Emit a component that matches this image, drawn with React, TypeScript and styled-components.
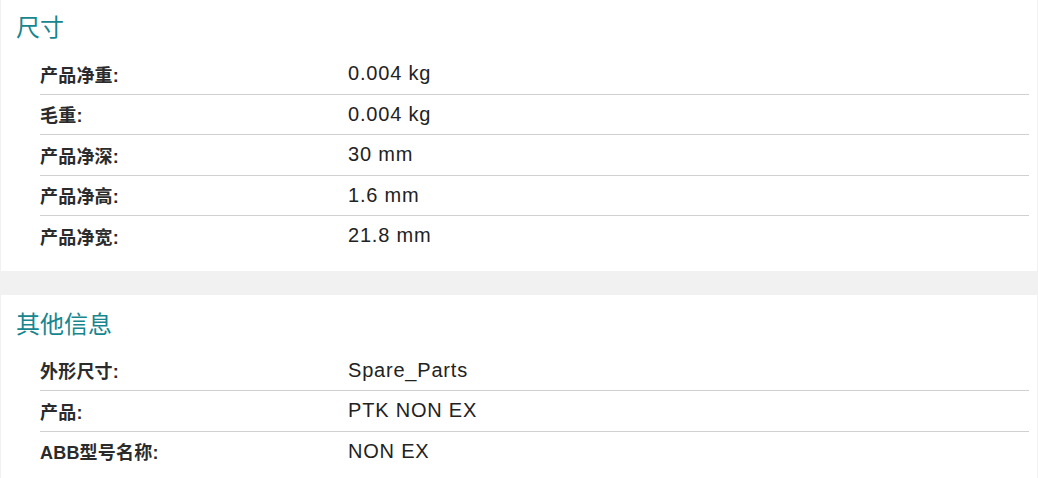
import React from "react";
import styled, { createGlobalStyle } from "styled-components";

const Global = createGlobalStyle`
  html, body { margin: 0; padding: 0; }
  body {
    background: #f1f1f1;
    font-family: "Liberation Sans", "Noto Sans CJK SC", sans-serif;
    overflow: hidden;
  }
`;

const Page = styled.div`
  display: flex;
  flex-direction: column;
  gap: 24px;
  margin-top: -2px;
  padding: 0 1px;
`;

const Card = styled.section`
  background: #ffffff;
  padding: 13px 8px 15px 0;
`;

const Title = styled.h2`
  margin: 0 0 0 15px;
  height: 30px;
  line-height: 30px;
  font-family: "Noto Sans CJK SC", sans-serif;
  font-weight: 400;
  font-size: 24px;
  color: #17868f;
`;

const Table = styled.div`
  margin: 13px 0 0 39px;
  display: flex;
  flex-direction: column;
`;

const Row = styled.div<{ $last?: boolean }>`
  display: grid;
  grid-template-columns: 308px 1fr;
  align-items: center;
  height: 39.5px;
  border-bottom: ${(p) => (p.$last ? "none" : "1px solid #d0d0d0")};
`;

const Label = styled.div`
  font-family: "Liberation Sans", "Noto Sans CJK SC", sans-serif;
  font-weight: 700;
  font-size: 18px;
  letter-spacing: 0.2px;
  color: #2b2b2b;
`;

const Value = styled.div`
  font-family: "Liberation Sans", "Noto Sans CJK SC", sans-serif;
  font-size: 20px;
  letter-spacing: 0.8px;
  color: #222;
`;

type Item = [string, string];

const sections: { title: string; items: Item[] }[] = [
  {
    title: "尺寸",
    items: [
      ["产品净重:", "0.004 kg"],
      ["毛重:", "0.004 kg"],
      ["产品净深:", "30 mm"],
      ["产品净高:", "1.6 mm"],
      ["产品净宽:", "21.8 mm"],
    ],
  },
  {
    title: "其他信息",
    items: [
      ["外形尺寸:", "Spare_Parts"],
      ["产品:", "PTK NON EX"],
      ["ABB型号名称:", "NON EX"],
    ],
  },
];

export default function App() {
  return (
    <>
      <Global />
      <Page>
        {sections.map((s) => (
          <Card key={s.title}>
            <Title>{s.title}</Title>
            <Table>
              {s.items.map(([k, v], i) => (
                <Row key={k} $last={i === s.items.length - 1}>
                  <Label>{k}</Label>
                  <Value>{v}</Value>
                </Row>
              ))}
            </Table>
          </Card>
        ))}
      </Page>
    </>
  );
}
